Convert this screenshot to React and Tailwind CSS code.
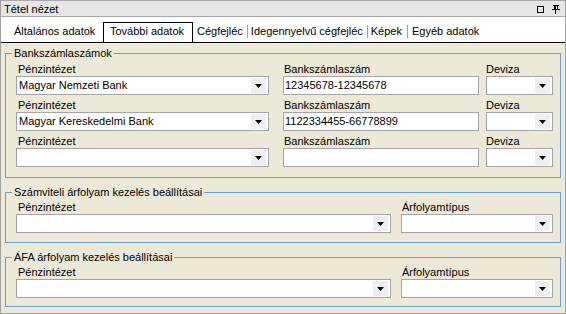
import React from "react";

function Arrow() {
  return (
    <svg width="7" height="4" viewBox="0 0 7 4">
      <polygon points="0,0 7,0 3.5,4" fill="#000" />
    </svg>
  );
}

function Combo({ value = "", className = "" }) {
  return (
    <div className={"flex h-[19px] border border-[#a5a5a5] bg-white " + className}>
      <div className="flex-1 pl-[2px] leading-[17px] whitespace-nowrap overflow-hidden">{value}</div>
      <div className="w-[15px] my-[1px] mr-[2px] bg-[#efefef] flex items-center justify-center">
        <Arrow />
      </div>
    </div>
  );
}

function Input({ value = "", className = "" }) {
  return (
    <div className={"h-[19px] border border-[#a5a5a5] bg-white pl-[1px] leading-[17px] whitespace-nowrap " + className}>
      {value}
    </div>
  );
}

function Label({ children, className = "" }) {
  return <div className={"leading-[14px] whitespace-nowrap " + className}>{children}</div>;
}

function Group({ title, className = "", children }) {
  return (
    <fieldset className={"ml-[4px] w-[556px] border border-[#68a0d6] pl-[10px] pr-[7px] " + className}>
      <legend className="ml-[-4px] px-[2px] leading-[13px]">{title}</legend>
      {children}
    </fieldset>
  );
}

function BankRow({ bank, acct, first }) {
  return (
    <div className={"grid grid-cols-[253px_210px_74px] " + (first ? "mt-[2px]" : "mt-[3px]")}>
      <Label className="pl-[2px]">Pénzintézet</Label>
      <Label className="ml-[14px] pl-[1px]">Bankszámlaszám</Label>
      <Label className="ml-[7px]">Deviza</Label>
      <Combo value={bank} />
      <Input value={acct} className="ml-[14px]" />
      <Combo className="ml-[7px]" />
    </div>
  );
}

function RateRow() {
  return (
    <div className="grid grid-cols-[375px_152px] gap-x-[10px] mt-[1px]">
      <Label className="pl-[2px]">Pénzintézet</Label>
      <Label className="pl-[1px]">Árfolyamtípus</Label>
      <Combo />
      <Combo />
    </div>
  );
}

function Pin() {
  return (
    <svg width="8" height="9" viewBox="0 0 8 9" shapeRendering="crispEdges">
      <rect x="1" y="0" width="6" height="1" fill="#000" />
      <rect x="2" y="0" width="2" height="5" fill="#000" />
      <rect x="5" y="0" width="1" height="5" fill="#000" />
      <rect x="0" y="4" width="8" height="1" fill="#000" />
      <rect x="3" y="5" width="1" height="4" fill="#000" />
    </svg>
  );
}

export default function App() {
  return (
    <div className="w-[566px] h-[314px] overflow-hidden bg-[#ece9d8] border-x border-b border-[#a0a0a0] font-['Liberation_Sans',Arial,sans-serif] text-[11px] text-black">
      {/* Title bar */}
      <div className="h-[17px] bg-[#e6e6e6] border-b border-[#a8a8a8] flex items-center pl-[3px] pr-[5px] -mx-px border-x border-t">
        <span className="flex-1 leading-[14px] mt-[1px]">Tétel nézet</span>
        <div className="flex items-center gap-[8px] mt-[2px]">
          <div className="w-[7px] h-[7px] border border-black" />
          <Pin />
        </div>
      </div>
      {/* Tabs */}
      <div className="h-[26px] bg-white border-b border-black flex items-end">
        <div className="w-[102px] pl-[13px] leading-[14px] pb-[4px]">Általános adatok</div>
        <div className="w-[90px] h-[20px] border-x border-t border-black pl-[6px] leading-[14px] pt-[1px] bg-white">További adatok</div>
        <div className="pl-[4px] pr-[4px] leading-[14px] pb-[4px]">Cégfejléc</div>
        <div className="w-px h-[13px] bg-[#a0a0a0] mb-[4px]" />
        <div className="pl-[3px] pr-[4px] leading-[14px] pb-[4px]">Idegennyelvű cégfejléc</div>
        <div className="w-px h-[13px] bg-[#a0a0a0] mb-[4px]" />
        <div className="pl-[3px] pr-[5px] leading-[14px] pb-[4px]">Képek</div>
        <div className="w-px h-[13px] bg-[#a0a0a0] mb-[4px]" />
        <div className="pl-[4px] leading-[14px] pb-[4px]">Egyéb adatok</div>
      </div>
      {/* Content */}
      <Group title="Bankszámlaszámok" className="mt-[4px] pb-[10px]">
        <BankRow bank="Magyar Nemzeti Bank" acct="12345678-12345678" first />
        <BankRow bank="Magyar Kereskedelmi Bank" acct="1122334455-66778899" />
        <BankRow bank="" acct="" />
      </Group>
      <Group title="Számviteli árfolyam kezelés beállításai" className="mt-[8px] pb-[9px]">
        <RateRow />
      </Group>
      <Group title="ÁFA árfolyam kezelés beállításai" className="mt-[8px] pb-[8px]">
        <RateRow />
      </Group>
    </div>
  );
}
